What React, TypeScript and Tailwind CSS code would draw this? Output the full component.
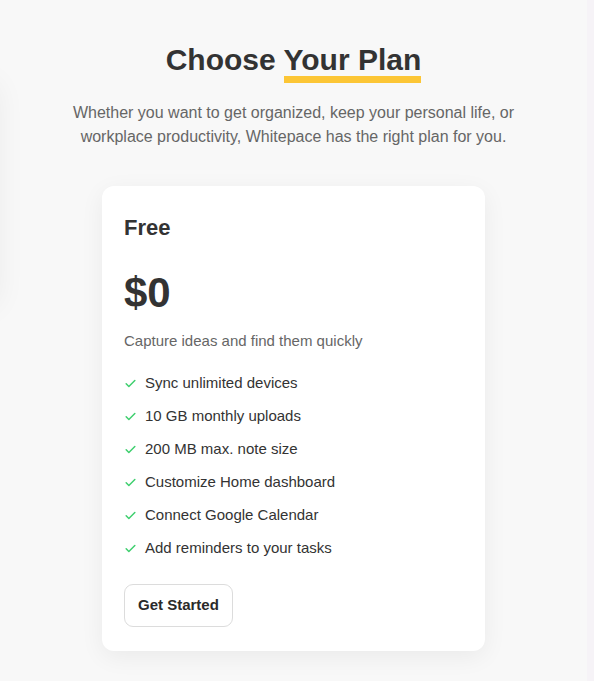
import React from "react";

const features = [
  "Sync unlimited devices",
  "10 GB monthly uploads",
  "200 MB max. note size",
  "Customize Home dashboard",
  "Connect Google Calendar",
  "Add reminders to your tasks",
];

function Check() {
  return (
    <svg
      viewBox="0 0 24 24"
      className="h-[13px] w-[13px] shrink-0 text-[#3ecf6e]"
      fill="none"
      stroke="currentColor"
      strokeWidth="2.75"
      strokeLinecap="round"
      strokeLinejoin="round"
    >
      <path d="M4 12.5l5 5L20 6.5" />
    </svg>
  );
}

export default function App() {
  return (
    <div className="flex min-h-[681px] w-full overflow-hidden bg-[#f8f8f8] font-['Liberation_Sans',Arial,sans-serif] text-[#333]">
      <main className="relative flex-1 pt-[42px] pb-[30px]">
        {/* ghost card of the carousel, off-screen to the left */}
        <div className="absolute left-[-302px] top-[78px] h-[225px] w-[300px] rounded-xl bg-white shadow-[0_4px_30px_rgba(0,0,0,0.06)]" />

        <h2 className="text-center text-[30px] font-bold leading-[36px]">
          Choose{" "}
          <span className="relative">
            Your Plan
            <span className="absolute left-0 right-0 top-[33px] h-[7px] bg-[#fcc636]" />
          </span>
        </h2>
        <p className="mx-auto mt-[23px] max-w-[460px] text-center text-[16px] leading-[24px] text-[#666]">
          Whether you want to get organized, keep your personal life, or
          workplace productivity, Whitepace has the right plan for you.
        </p>

        <div className="mx-auto mt-[37px] w-[383px] rounded-xl bg-white px-[22px] pt-[28px] pb-[24px] shadow-[0_6px_24px_rgba(0,0,0,0.06)]">
          <h3 className="text-[22px] font-bold leading-[28px]">Free</h3>
          <div className="mt-[30px] text-[42px] font-bold leading-[42px]">$0</div>
          <p className="mt-[15px] text-[15px] leading-[24px] text-[#666]">
            Capture ideas and find them quickly
          </p>
          <ul className="mt-[18px] flex flex-col gap-[9px]">
            {features.map((f) => (
              <li key={f} className="flex items-center gap-[8px] text-[15px] leading-[24px] text-[#333]">
                <Check />
                <span>{f}</span>
              </li>
            ))}
          </ul>
          <button className="mt-[24px] flex h-[43px] items-center rounded-[9px] border border-[#dcdcdc] bg-white px-[13px] text-[15px] font-bold text-[#2a2a2a]">
            Get Started
          </button>
        </div>
      </main>
      <aside className="w-[7px] shrink-0 bg-[#f6f3f7]" />
    </div>
  );
}
